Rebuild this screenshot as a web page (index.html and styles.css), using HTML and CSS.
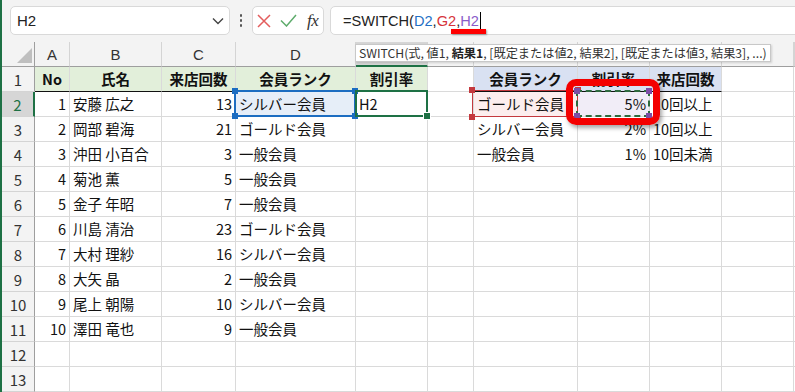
FILE: index.html
```html
<!DOCTYPE html>
<html lang="ja">
<head>
<meta charset="utf-8">
<title>SWITCH</title>
<link rel="stylesheet" href="styles.css">
</head>
<body>
<div class="app">
  <div class="fbar">
    <div class="namebox">
      <span class="nb-text">H2</span>
      <svg class="chev" width="12" height="8" viewBox="0 0 12 8"><polyline points="1,1.5 6,6.5 11,1.5" fill="none" stroke="#444" stroke-width="1.4"/></svg>
    </div>
    <div class="dots"><i></i><i></i><i></i></div>
    <div class="fxbox">
      <svg class="ic-x" width="14" height="14" viewBox="0 0 14 14"><path d="M1 1 L13 13 M13 1 L1 13" stroke="#e35d5d" stroke-width="1.5" fill="none"/></svg>
      <svg class="ic-ok" width="17" height="13" viewBox="0 0 17 13"><polyline points="1,6.5 6.5,12 16,1" fill="none" stroke="#5eac6c" stroke-width="1.5"/></svg>
      <span class="fx">fx</span>
    </div>
    <div class="formula"><span>=SWITCH(</span><span class="rd">D2</span><span>,</span><span class="rg">G2</span><span class="mark">,<span class="rh">H2</span></span><span class="caret"></span></div>
  </div>

  <div class="sheet">
    <div class="row head">
      <div class="corner"><span class="tri"></span></div>
      <div class="ch">A</div><div class="ch">B</div><div class="ch">C</div><div class="ch">D</div><div class="ch act">E</div><div class="ch">F</div><div class="ch">G</div><div class="ch">H</div><div class="ch">I</div><div class="ch">J</div><div class="ch"></div>
    </div>
    <div class="row">
      <div class="rn">1</div>
      <div class="c g b ctr hb">No</div><div class="c g b ctr hb">氏名</div><div class="c g b ctr hb">来店回数</div><div class="c g b ctr hb">会員ランク</div><div class="c g b ctr hb">割引率</div><div class="c"></div><div class="c bl b ctr hb">会員ランク</div><div class="c bl b ctr hb">割引率</div><div class="c bl b ctr hb">来店回数</div><div class="c"></div><div class="c"></div>
    </div>
    <div class="row">
      <div class="rn act">2</div>
      <div class="c r">1</div><div class="c">安藤 広之</div><div class="c r">13</div>
      <div class="c fill-d">シルバー会員<div class="frame f-blue"><i class="h tl"></i><i class="h tr"></i><i class="h bl"></i><i class="h br"></i></div></div>
      <div class="c edit">H2<div class="frame f-green"><i class="fh"></i></div></div>
      <div class="c"></div>
      <div class="c fill-g">ゴールド会員<div class="frame f-red"><i class="h tl"></i><i class="h tr"></i><i class="h bl"></i><i class="h br"></i></div></div>
      <div class="c r fill-h">5%<div class="frame f-purple"><i class="h tl"></i><i class="h tr"></i><i class="h bl"></i><i class="h br"></i></div><div class="annot"></div></div>
      <div class="c">10回以上</div><div class="c"></div><div class="c"></div>
    </div>
    <div class="row">
      <div class="rn">3</div>
      <div class="c r">2</div><div class="c">岡部 碧海</div><div class="c r">21</div><div class="c">ゴールド会員</div><div class="c"></div><div class="c"></div><div class="c">シルバー会員</div><div class="c r">2%</div><div class="c">10回以上</div><div class="c"></div><div class="c"></div>
    </div>
    <div class="row">
      <div class="rn">4</div>
      <div class="c r">3</div><div class="c">沖田 小百合</div><div class="c r">3</div><div class="c">一般会員</div><div class="c"></div><div class="c"></div><div class="c">一般会員</div><div class="c r">1%</div><div class="c">10回未満</div><div class="c"></div><div class="c"></div>
    </div>
    <div class="row">
      <div class="rn">5</div>
      <div class="c r">4</div><div class="c">菊池 薫</div><div class="c r">5</div><div class="c">一般会員</div><div class="c"></div><div class="c"></div><div class="c"></div><div class="c"></div><div class="c"></div><div class="c"></div><div class="c"></div>
    </div>
    <div class="row">
      <div class="rn">6</div>
      <div class="c r">5</div><div class="c">金子 年昭</div><div class="c r">7</div><div class="c">一般会員</div><div class="c"></div><div class="c"></div><div class="c"></div><div class="c"></div><div class="c"></div><div class="c"></div><div class="c"></div>
    </div>
    <div class="row">
      <div class="rn">7</div>
      <div class="c r">6</div><div class="c">川島 清治</div><div class="c r">23</div><div class="c">ゴールド会員</div><div class="c"></div><div class="c"></div><div class="c"></div><div class="c"></div><div class="c"></div><div class="c"></div><div class="c"></div>
    </div>
    <div class="row">
      <div class="rn">8</div>
      <div class="c r">7</div><div class="c">大村 理紗</div><div class="c r">16</div><div class="c">シルバー会員</div><div class="c"></div><div class="c"></div><div class="c"></div><div class="c"></div><div class="c"></div><div class="c"></div><div class="c"></div>
    </div>
    <div class="row">
      <div class="rn">9</div>
      <div class="c r">8</div><div class="c">大矢 晶</div><div class="c r">2</div><div class="c">一般会員</div><div class="c"></div><div class="c"></div><div class="c"></div><div class="c"></div><div class="c"></div><div class="c"></div><div class="c"></div>
    </div>
    <div class="row">
      <div class="rn">10</div>
      <div class="c r">9</div><div class="c">尾上 朝陽</div><div class="c r">10</div><div class="c">シルバー会員</div><div class="c"></div><div class="c"></div><div class="c"></div><div class="c"></div><div class="c"></div><div class="c"></div><div class="c"></div>
    </div>
    <div class="row">
      <div class="rn">11</div>
      <div class="c r">10</div><div class="c">澤田 竜也</div><div class="c r">9</div><div class="c">一般会員</div><div class="c"></div><div class="c"></div><div class="c"></div><div class="c"></div><div class="c"></div><div class="c"></div><div class="c"></div>
    </div>
    <div class="row">
      <div class="rn">12</div>
      <div class="c"></div><div class="c"></div><div class="c"></div><div class="c"></div><div class="c"></div><div class="c"></div><div class="c"></div><div class="c"></div><div class="c"></div><div class="c"></div><div class="c"></div>
    </div>
    <div class="row">
      <div class="rn">13</div>
      <div class="c"></div><div class="c"></div><div class="c"></div><div class="c"></div><div class="c"></div><div class="c"></div><div class="c"></div><div class="c"></div><div class="c"></div><div class="c"></div><div class="c"></div>
    </div>
  </div>

  <div class="tip">SWITCH(式, 値1, <b>結果1</b>, [既定または値2, 結果2], [既定または値3, 結果3], ...)</div>
</div>
</body>
</html>
```

FILE: styles.css
```css
* { box-sizing: border-box; }
html, body { margin: 0; padding: 0; }
body {
  width: 795px;
  height: 392px;
  overflow: hidden;
  background: #fff;
  border-left: 2px solid #1e7145;
  font-family: "Noto Sans CJK JP", sans-serif;
  color: #111;
}
.app { position: relative; }

/* formula bar */
.fbar {
  height: 42px;
  background: #f3f3f3;
  display: flex;
  align-items: flex-start;
  padding: 6px 0 0 8px;
  overflow: hidden;
}
.namebox {
  width: 220px;
  height: 29px;
  background: #fff;
  border: 1px solid #d9d9d9;
  border-radius: 5px;
  display: flex;
  align-items: center;
  justify-content: space-between;
  padding: 0 5px 0 6px;
}
.nb-text { font: 15px "Liberation Sans", sans-serif; color: #222; }
.chev { display: block; margin-top: 1px; }
.dots {
  width: 22px;
  height: 29px;
  display: flex;
  flex-direction: column;
  align-items: center;
  justify-content: center;
  gap: 2.5px;
}
.dots i { width: 2.5px; height: 2.5px; background: #555; border-radius: 50%; }
.fxbox {
  width: 72px;
  height: 29px;
  background: #fff;
  border: 1px solid #d9d9d9;
  border-radius: 5px;
  display: flex;
  align-items: center;
  padding-left: 4px;
}
.ic-x { display: block; }
.ic-ok { display: block; margin-left: 9px; }
.fx {
  font: italic 17px "Liberation Serif", serif;
  color: #333;
  margin-left: 10px;
  letter-spacing: -0.5px;
}
.formula {
  flex: 1;
  height: 29px;
  margin-left: 6px;
  margin-right: -20px;
  background: #fff;
  border: 1px solid #d9d9d9;
  border-radius: 5px;
  display: flex;
  align-items: center;
  padding-left: 12px;
  font: 14.6px "Liberation Sans", sans-serif;
  color: #222;
}
.rd { color: #1f6fc5; }
.rg { color: #d6333b; }
.rh { color: #8a5cc9; }
.mark { position: relative; }
.mark::after {
  content: "";
  position: absolute;
  left: -5px;
  right: -7px;
  bottom: -5px;
  height: 5px;
  background: #f00;
  box-shadow: 1px 1px 2px rgba(0,0,0,0.35);
}
.caret { width: 1px; height: 17px; background: #000; margin-left: 1px; }

/* sheet */
.row {
  display: grid;
  grid-template-columns: 33px 35px 92px 74px 120px 72px 46px 104px 72px 72px 72px 1fr;
  height: 25px;
}
.corner, .ch, .rn {
  background: #f3f3f3;
  color: #333;
  display: flex;
  align-items: center;
  justify-content: center;
}
.corner {
  position: relative;
  border-right: 1px solid #9e9e9e;
  border-bottom: 1px solid #9e9e9e;
  align-items: flex-end;
  justify-content: flex-end;
  padding: 0 2px 3px 0;
}
.tri {
  width: 0; height: 0;
  border-left: 15px solid transparent;
  border-bottom: 15px solid #bfbfbf;
}
.ch {
  font: 15px "Liberation Sans", sans-serif;
  border-right: 1px solid #d4d4d4;
  border-bottom: 1px solid #9e9e9e;
}
.ch.act {
  background: #d6d6d6;
  color: #1e7145;
  border-bottom: 2px solid #1e7145;
}
.rn {
  font-size: 15px;
  border-right: 1px solid #9e9e9e;
  border-bottom: 1px solid #d4d4d4;
}
.rn.act {
  background: #d6d6d6;
  color: #1e7145;
  border-right: 2px solid #1e7145;
}
.c {
  border-right: 1px solid #dadada;
  border-bottom: 1px solid #dadada;
  font-size: 14.5px;
  line-height: 24px;
  padding: 0 3px 0 3px;
  white-space: nowrap;
  display: flex;
  align-items: center;
}
.c.r { justify-content: flex-end; }
.c.ctr { justify-content: center; }
.c.b { font-weight: bold; }
.c.g { background: #e2efda; }
.c.bl { background: #d9e1f2; }
.c.hb { border-bottom-color: #111; }

.fill-d, .fill-g, .fill-h, .edit { position: relative; }
.fill-d { background: #e6eef8; }
.fill-g { background: #fceeee; }
.fill-h { background: #f1edf7; }

.frame { position: absolute; pointer-events: none; }
.f-blue { left: -2px; top: -2px; right: -1px; bottom: -1px; border: 2px solid #1c6dc1; }
.f-green { left: -1px; top: -2px; right: -1px; bottom: -1px; border: 2px solid #1e7145; }
.f-red { left: -2px; top: -2px; right: -1px; bottom: -1px; border: 1.5px solid #c4393e; }
.f-purple { left: -2px; top: -2px; right: -1px; bottom: -1px; border: 2px dashed #2d6a3e; }

.h { position: absolute; width: 6px; height: 6px; }
.h.tl { left: -4px; top: -4px; }
.h.tr { right: -4px; top: -4px; }
.h.bl { left: -4px; bottom: -4px; }
.h.br { right: -4px; bottom: -4px; }
.f-blue .h { background: #1c6dc1; }
.f-red .h { background: #c4393e; }
.f-purple .h { background: #7d4ea6; }
.fh {
  position: absolute;
  right: -4px;
  bottom: -4px;
  width: 6px;
  height: 6px;
  background: #1e7145;
  outline: 1px solid #fff;
}

.annot {
  position: absolute;
  left: -12px;
  right: -11px;
  top: -13px;
  bottom: -9px;
  border: 7px solid #f40000;
  border-radius: 10px;
  box-shadow: 2px 3px 4px rgba(0,0,0,0.35);
  z-index: 5;
}

.tip {
  position: absolute;
  left: 353px;
  top: 44px;
  height: 18px;
  padding: 0 3px;
  background: #fff;
  border: 1px solid #c8c8c8;
  box-shadow: 1px 1px 2px rgba(0,0,0,0.15);
  font-size: 12.2px;
  line-height: 16px;
  color: #333;
  white-space: nowrap;
  z-index: 10;
}
.tip b { font-weight: bold; color: #222; }
```
